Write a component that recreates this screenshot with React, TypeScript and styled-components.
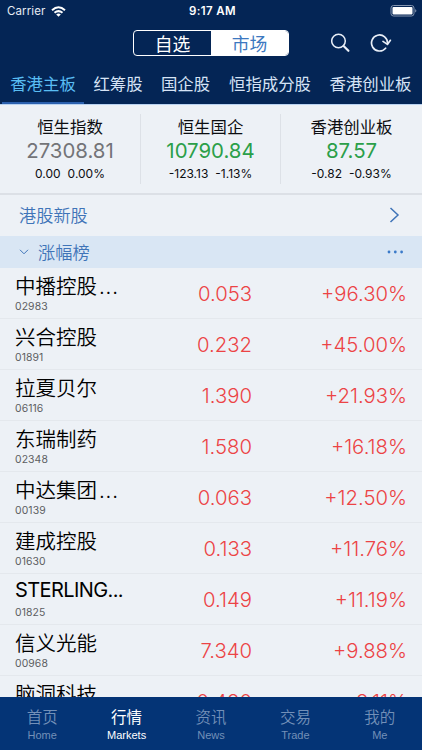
import React from "react";
import styled, { createGlobalStyle } from "styled-components";

const Global = createGlobalStyle`
  * { box-sizing: border-box; }
  body { margin: 0; background: #edf1f6; }
`;

const Screen = styled.div`
  width: 422px;
  height: 750px;
  display: flex;
  flex-direction: column;
  overflow: hidden;
  background: #edf1f6;
  color: #0c0d10;
  font-family: Inter, "Noto Sans CJK SC", sans-serif;
  white-space: nowrap;
`;

const Header = styled.header`
  height: 104px;
  flex: none;
  background: #042555;
  color: #fff;
`;

const StatusBar = styled.div`
  height: 22px;
  display: grid;
  grid-template-columns: 1fr auto 1fr;
  align-items: center;
  padding: 0 4px 0 7px;
`;

const Carrier = styled.div`
  display: flex;
  align-items: center;
  gap: 6px;
  font-size: 11.5px;
  letter-spacing: 0.1px;
  color: #e6ebf3;
`;

const Clock = styled.div`
  font-size: 11.5px;
  font-weight: 600;
  letter-spacing: 0.4px;
`;

const BatterySlot = styled.div`
  display: flex;
  justify-content: flex-end;
`;

const Toolbar = styled.div`
  height: 42px;
  display: flex;
  align-items: center;
  padding: 0 30px 0 133px;
`;

const Segmented = styled.div`
  display: flex;
  width: 156px;
  height: 26px;
  border: 1px solid #fff;
  border-radius: 4px;
  overflow: hidden;
`;

const Segment = styled.button<{ $active?: boolean }>`
  flex: 1;
  border: 0;
  padding: 0;
  font: 400 17.8px/24px "Noto Sans CJK SC", sans-serif;
  background: ${(p) => (p.$active ? "#fff" : "transparent")};
  color: ${(p) => (p.$active ? "#3d78c0" : "#fff")};
`;

const ToolIcons = styled.div`
  display: flex;
  align-items: center;
  gap: 19px;
  margin-left: auto;
`;

const Tabs = styled.nav`
  height: 40px;
  display: flex;
  padding-left: 2px;
`;

const Tab = styled.a<{ $active?: boolean; $w: number }>`
  width: ${(p) => p.$w}px;
  flex: none;
  text-align: center;
  font: 400 16.4px/39px "Noto Sans CJK SC", sans-serif;
  color: ${(p) => (p.$active ? "#59bdf3" : "#d6e3f5")};
  border-bottom: 2px solid ${(p) => (p.$active ? "#2b60ae" : "transparent")};
`;

const Summary = styled.section`
  height: 91px;
  flex: none;
  display: grid;
  grid-template-columns: 140px 140px 142px;
  padding: 9px 0 10px;
  border-top: 1px solid #b9d2f0;
  border-bottom: 2px solid #dce0e6;
`;

const IndexCard = styled.div`
  display: flex;
  flex-direction: column;
  align-items: center;
  & + & { border-left: 1px solid #dde1e7; }
`;

const IndexName = styled.div`
  font: 400 16.4px/24px "Noto Sans CJK SC", sans-serif;
`;

const IndexValue = styled.div<{ $color: string }>`
  font-size: 20.4px;
  font-weight: 400;
  line-height: 26px;
  color: ${(p) => p.$color};
`;

const IndexChange = styled.div`
  display: flex;
  gap: 7px;
  font-size: 12px;
  line-height: 20px;
`;

const LinkRow = styled.div`
  height: 41px;
  flex: none;
  display: flex;
  align-items: center;
  justify-content: space-between;
  padding: 0 22px 1px 19px;
  font: 350 17.2px/40px "Noto Sans CJK SC", sans-serif;
  color: #3f74b8;
`;

const SectionBar = styled.div`
  height: 32px;
  flex: none;
  display: flex;
  align-items: center;
  padding: 0 18px 0 19px;
  background: #d9e6f4;
  font: 350 17.2px/32px "Noto Sans CJK SC", sans-serif;
  color: #3f74b8;
`;

const SectionTitle = styled.span`
  margin-left: 9px;
  flex: 1;
`;

const StockList = styled.main`
  flex: 1;
  min-height: 0;
  overflow: hidden;
`;

const StockRow = styled.div`
  height: 51px;
  display: grid;
  grid-template-columns: 125px 112px 155px;
  padding: 0 15px;
  border-bottom: 1px solid #e4e8ed;
`;

const StockName = styled.div<{ $latin?: boolean }>`
  font-size: ${(p) => (p.$latin ? 20 : 20.5)}px;
  font-weight: ${(p) => (p.$latin ? 400 : 350)};
  line-height: 30px;
  height: 32px;
  padding-top: ${(p) => (p.$latin ? 1 : 2)}px;
  font-family: ${(p) => (p.$latin ? "Inter" : '"Noto Sans CJK SC"')}, sans-serif;
  letter-spacing: ${(p) => (p.$latin ? "-0.6px" : "0")};
  color: #000;
`;

const Dots = styled.span`
  font-family: Inter, sans-serif;
  letter-spacing: 0.8px;
  margin-left: 2px;
`;

const StockCode = styled.div`
  font-size: 10.4px;
  line-height: 14px;
  letter-spacing: 0.1px;
  color: #5c5e62;
`;

const Figure = styled.div`
  font-size: 20.3px;
  font-weight: 350;
  line-height: 51px;
  text-align: right;
  color: #ec4345;
`;

const TabBar = styled.nav`
  height: 53px;
  flex: none;
  display: grid;
  grid-template-columns: repeat(5, 1fr);
  background: #043476;
`;

const BarItem = styled.a<{ $active?: boolean }>`
  display: flex;
  flex-direction: column;
  align-items: center;
  padding-top: 7px;
  color: ${(p) => (p.$active ? "#fff" : "#7390b8")};
`;

const BarTitle = styled.span<{ $active?: boolean }>`
  font: ${(p) => (p.$active ? 400 : 350)} 15.5px/24px "Noto Sans CJK SC", sans-serif;
`;

const BarCaption = styled.span`
  font: 400 11px/15px "Liberation Sans", sans-serif;
`;

const tabs: [string, number][] = [
  ["香港主板", 82],
  ["红筹股", 68],
  ["国企股", 67],
  ["恒指成分股", 102],
  ["香港创业板", 99],
];

const indices = [
  { name: "恒生指数", value: "27308.81", diff: "0.00", pct: "0.00%", color: "#737478" },
  { name: "恒生国企", value: "10790.84", diff: "-123.13", pct: "-1.13%", color: "#2b9f49" },
  { name: "香港创业板", value: "87.57", diff: "-0.82", pct: "-0.93%", color: "#2b9f49" },
];

const stocks = [
  ["中播控股...", "02983", "0.053", "+96.30%"],
  ["兴合控股", "01891", "0.232", "+45.00%"],
  ["拉夏贝尔", "06116", "1.390", "+21.93%"],
  ["东瑞制药", "02348", "1.580", "+16.18%"],
  ["中达集团...", "00139", "0.063", "+12.50%"],
  ["建成控股", "01630", "0.133", "+11.76%"],
  ["STERLING...", "01825", "0.149", "+11.19%"],
  ["信义光能", "00968", "7.340", "+9.88%"],
  ["脑洞科技", "02203", "0.480", "+8.11%"],
];

const barItems = [
  ["首页", "Home"],
  ["行情", "Markets"],
  ["资讯", "News"],
  ["交易", "Trade"],
  ["我的", "Me"],
];

const Wifi = () => (
  <svg width="15" height="11" viewBox="0 0 15 11" fill="none" stroke="#fff" strokeWidth="2">
    <path d="M1 4.2Q7.5-1.6 14 4.2M3.5 6.8Q7.5 3.4 11.5 6.8" />
    <path d="M5.2 8.4Q7.5 6.6 9.8 8.4L7.5 10.7Z" fill="#fff" stroke="none" />
  </svg>
);

const Battery = () => (
  <svg width="28" height="12" viewBox="0 0 28 12">
    <rect x="1" y=".5" width="23" height="10.5" rx="2.5" fill="none" stroke="#8495b0" />
    <rect x="2.5" y="2" width="20" height="7.5" rx="1" fill="#fff" />
    <path d="M25.2 4Q27.6 5.8 25.2 7.6Z" fill="#8495b0" />
  </svg>
);

const Search = () => (
  <svg width="20" height="20" viewBox="0 0 20 20" fill="none" stroke="#e8eef7">
    <circle cx="7.5" cy="8" r="6.8" strokeWidth="1.5" />
    <path d="M12.6 13L17.4 17.8" strokeWidth="2.2" strokeLinecap="round" />
  </svg>
);

const Refresh = () => (
  <svg width="22" height="20" viewBox="0 0 22 20" fill="none" stroke="#e8eef7" strokeWidth="1.7" strokeLinecap="round" strokeLinejoin="round">
    <path d="M15.6 15.2A8 8 0 1 1 17.5 10.5" />
    <path d="M13 8.4L17.4 11.4L20.4 7.3" />
  </svg>
);

export default function App() {
  return (
    <Screen>
      <Global />
      <Header>
        <StatusBar>
          <Carrier>Carrier<Wifi /></Carrier>
          <Clock>9:17 AM</Clock>
          <BatterySlot><Battery /></BatterySlot>
        </StatusBar>
        <Toolbar>
          <Segmented>
            <Segment>自选</Segment>
            <Segment $active>市场</Segment>
          </Segmented>
          <ToolIcons><Search /><Refresh /></ToolIcons>
        </Toolbar>
        <Tabs>
          {tabs.map(([label, w], i) => (
            <Tab key={label} $w={w} $active={i === 0}>{label}</Tab>
          ))}
        </Tabs>
      </Header>
      <Summary>
        {indices.map((x) => (
          <IndexCard key={x.name}>
            <IndexName>{x.name}</IndexName>
            <IndexValue $color={x.color}>{x.value}</IndexValue>
            <IndexChange><span>{x.diff}</span><span>{x.pct}</span></IndexChange>
          </IndexCard>
        ))}
      </Summary>
      <LinkRow>
        港股新股
        <svg width="11" height="16" viewBox="0 0 11 16" fill="none" stroke="#3f74b8" strokeWidth="1.5">
          <path d="M1.5 1L9 8L1.5 15" />
        </svg>
      </LinkRow>
      <SectionBar>
        <svg width="10" height="6" viewBox="0 0 10 6" fill="none" stroke="#3f74b8">
          <path d="M1 .8L5 4.8L9 .8" />
        </svg>
        <SectionTitle>涨幅榜</SectionTitle>
        <svg width="17" height="4" viewBox="0 0 17 4" fill="#3b7ac9">
          <circle cx="2" cy="2" r="1.4" />
          <circle cx="8.3" cy="2" r="1.4" />
          <circle cx="14.6" cy="2" r="1.4" />
        </svg>
      </SectionBar>
      <StockList>
        {stocks.map(([name, code, price, pct]) => {
          const latin = name.startsWith("S");
          const cut = !latin && name.endsWith("...");
          return (
            <StockRow key={code}>
              <div>
                <StockName $latin={latin}>
                  {cut ? name.slice(0, -3) : name}
                  {cut && <Dots>...</Dots>}
                </StockName>
                <StockCode>{code}</StockCode>
              </div>
              <Figure>{price}</Figure>
              <Figure>{pct}</Figure>
            </StockRow>
          );
        })}
      </StockList>
      <TabBar>
        {barItems.map(([title, caption], i) => (
          <BarItem key={caption} $active={i === 1}>
            <BarTitle $active={i === 1}>{title}</BarTitle>
            <BarCaption>{caption}</BarCaption>
          </BarItem>
        ))}
      </TabBar>
    </Screen>
  );
}
